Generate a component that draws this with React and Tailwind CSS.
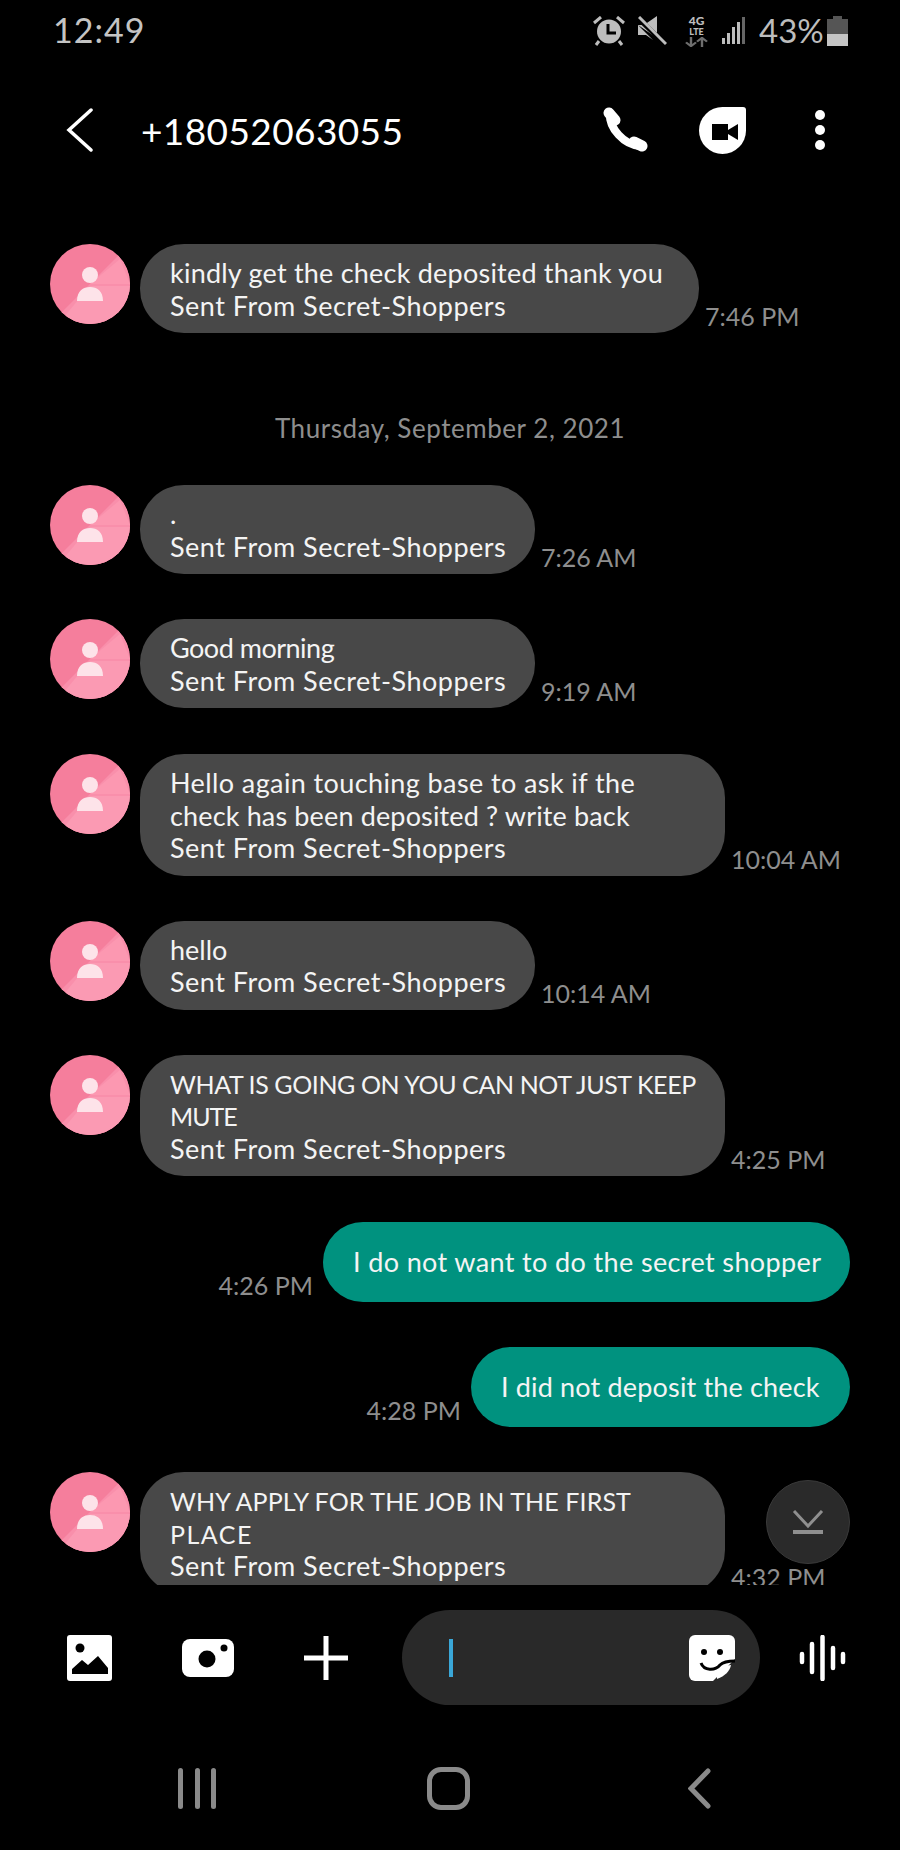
const font = { fontFamily: "Lato, 'Open Sans', sans-serif" };

const sent = ["Sent From Secret-Shoppers", "tracking-[0.5px]"];

const incoming = [
  { lines: [["kindly get the check deposited thank you", "tracking-[0.22px]"], sent], time: "7:46 PM", w: "w-[559px]", mb: "mb-[79px]" },
  { date: "Thursday, September 2, 2021" },
  { lines: [[".", ""], sent], time: "7:26 AM", w: "w-[395px]", mb: "mb-[45px]" },
  { lines: [["Good morning", "tracking-[-0.5px]"], sent], time: "9:19 AM", w: "w-[395px]", mb: "mb-[46px]" },
  { lines: [["Hello again touching base to ask if the", "tracking-[0.4px]"], ["check has been deposited ? write back", "tracking-[0.15px]"], sent], time: "10:04 AM", w: "w-[585px]", mb: "mb-[45px]" },
  { lines: [["hello", ""], sent], time: "10:14 AM", w: "w-[395px]", mb: "mb-[45px]" },
  { lines: [["WHAT IS GOING ON YOU CAN NOT JUST KEEP", "text-[25px] tracking-[-0.4px]"], ["MUTE", "text-[25px] tracking-[-1px]"], sent], time: "4:25 PM", w: "w-[585px]", mb: "mb-[46px]" },
  { out: "I do not want to do the secret shopper", track: "tracking-[0.37px]", time: "4:26 PM", w: "w-[527px]", mb: "mb-[45px]" },
  { out: "I did not deposit the check", track: "tracking-[0.17px]", time: "4:28 PM", w: "w-[379px]", mb: "mb-[45px]" },
  { lines: [["WHY APPLY FOR THE JOB IN THE FIRST", "text-[25px] tracking-[0.1px]"], ["PLACE", "text-[25px] tracking-[1.5px]"], sent], time: "4:32 PM", w: "w-[585px]", mb: "mb-0" },
];

function Avatar() {
  return (
    <svg width="80" height="80" viewBox="0 0 80 80" className="shrink-0">
      <defs>
        <clipPath id="av"><circle cx="40" cy="40" r="40" /></clipPath>
      </defs>
      <g clipPath="url(#av)">
        <rect width="80" height="80" fill="#f57e9c" />
        <polygon points="80,0 80,80 0,80" fill="#f98fab" />
        <polygon points="70,15 80,40 40,40" fill="#fc98b1" />
        <polygon points="8,80 80,80 80,42 40,42" fill="#fb9ab3" />
      </g>
      <circle cx="40" cy="31" r="8" fill="#fde3e9" />
      <path d="M27 57 C27 47 33 43 40 43 C47 43 53 47 53 57 Z" fill="#fde3e9" />
    </svg>
  );
}

function Time({ children }) {
  return <span className="text-[25px] leading-[32px] pb-[1px] text-[#8e8e8e] whitespace-nowrap">{children}</span>;
}

function Message({ m }) {
  if (m.date) {
    return <div className="text-center text-[26px] leading-[32px] tracking-[0.55px] text-[#8e8e8e] mb-[41px]">{m.date}</div>;
  }
  if (m.out) {
    return (
      <div className={`flex items-end justify-end gap-[10px] pr-[50px] ${m.mb}`}>
        <Time>{m.time}</Time>
        <div className={`${m.w} ${m.track} h-[80px] rounded-[40px] bg-[#00927f] pl-[30px] flex items-center text-[27px] text-[#f4f4f4] whitespace-nowrap`}>
          {m.out}
        </div>
      </div>
    );
  }
  return (
    <div className={`flex items-start gap-[10px] pl-[50px] ${m.mb}`}>
      <Avatar />
      <div className="flex items-end gap-[6px]">
        <div className={`${m.w} rounded-[44px] bg-[#484848] pl-[30px] pt-[13px] pb-[11px] text-[27px] leading-[32.5px] text-[#f4f4f4] whitespace-nowrap`}>
          {m.lines.map(([text, track], i) => (
            <div key={i} className={track}>{text}</div>
          ))}
        </div>
        <Time>{m.time}</Time>
      </div>
    </div>
  );
}

function StatusIcons() {
  return (
    <div className="flex items-center text-[#bdbdbd]">
      <svg width="32" height="30" viewBox="0 0 32 30">
        <circle cx="16" cy="15.5" r="12" fill="#bdbdbd" />
        <path d="M15 8 V17 H23" stroke="#000" strokeWidth="3" fill="none" />
        <path d="M1 7 L8 1 M31 7 L24 1 M6 25 L3 29 M26 25 L29 29" stroke="#bdbdbd" strokeWidth="3" />
      </svg>
      <svg width="29" height="30" viewBox="0 0 29 30" className="ml-[13px]">
        <path d="M0 9 H6 L19 0 V22 Z M0 9 V19 H8 L15 24 Z" fill="#bdbdbd" />
        <path d="M1 3 L27 28" stroke="#000" strokeWidth="5" />
        <path d="M1 1 L28 28" stroke="#bdbdbd" strokeWidth="3" />
      </svg>
      <div className="ml-[18px] w-[23px] h-[32px] flex flex-col items-center font-black">
        <span className="block text-[12px] leading-[12px]">4G</span>
        <span className="block text-[9px] leading-[10px]">LTE</span>
        <svg width="23" height="10" viewBox="0 0 23 13" preserveAspectRatio="none">
          <path d="M6 0 V11 M1 7 L6 12 L11 7" stroke="#6e6e6e" strokeWidth="2.4" fill="none" />
          <path d="M17 13 V2 M12 6 L17 1 L22 6" stroke="#6e6e6e" strokeWidth="2.4" fill="none" />
        </svg>
      </div>
      <div className="ml-[14px] flex items-end gap-[2px] h-[27px]">
        <div className="w-[3px] h-[6px] bg-[#bdbdbd]" />
        <div className="w-[3px] h-[11px] bg-[#bdbdbd]" />
        <div className="w-[3px] h-[17px] bg-[#bdbdbd]" />
        <div className="w-[3px] h-[22px] bg-[#bdbdbd]" />
        <div className="w-[3px] h-[27px] bg-[#666666]" />
      </div>
      <span className="ml-[14px] text-[33px] leading-none w-[62px] whitespace-nowrap">43%</span>
      <div className="ml-[6px] w-[21px] h-[30px] flex flex-col items-center">
        <div className="w-[9px] h-[3px] bg-[#555555]" />
        <div className="w-[21px] h-[15px] bg-[#555555]" />
        <div className="w-[21px] h-[12px] bg-[#c4c4c4]" />
      </div>
    </div>
  );
}

export default function App() {
  return (
    <div className="w-[900px] h-[1850px] bg-black flex flex-col overflow-hidden" style={font}>
      {/* status bar */}
      <div className="h-[60px] shrink-0 pl-[53px] pr-[52px] pt-[14px] flex items-start justify-between">
        <span className="text-[34px] leading-[32px] tracking-[1px] text-[#c4c4c4]">12:49</span>
        <div><StatusIcons /></div>
      </div>

      {/* header */}
      <div className="h-[140px] shrink-0 flex items-center pl-[66px]">
        <svg width="27" height="44" viewBox="0 0 27 44">
          <path d="M25 2 L3 22 L25 42" stroke="#fff" strokeWidth="3.5" fill="none" strokeLinecap="round" />
        </svg>
        <span className="ml-[48px] w-[260px] text-[37px] leading-none tracking-[0.4px] text-white whitespace-nowrap">+18052063055</span>
        <svg width="46" height="46" viewBox="0 0 46 46" className="ml-[201px]" fill="none" stroke="#fff" strokeLinecap="round">
          <path d="M8 7 C7 21 22 38 38 39" strokeWidth="8" />
          <path d="M7 6 L13 13" strokeWidth="11" />
          <path d="M32 35 L40 39" strokeWidth="11" />
        </svg>
        <svg width="47" height="47" viewBox="0 0 47 47" className="ml-[51px]">
          <path d="M23.5 0 H44 a3 3 0 0 1 3 3 V23.5 A23.5 23.5 0 1 1 23.5 0 Z" fill="#fff" />
          <rect x="13" y="17" width="16" height="16" fill="#000" />
          <polygon points="29,23 39,17 39,33 29,27" fill="#000" />
        </svg>
        <div className="ml-[69px] flex flex-col gap-[5px]">
          <div className="w-[10px] h-[10px] rounded-full bg-white" />
          <div className="w-[10px] h-[10px] rounded-full bg-white" />
          <div className="w-[10px] h-[10px] rounded-full bg-white" />
        </div>
      </div>

      {/* messages */}
      <div className="relative h-[1385px] shrink-0 overflow-hidden pt-[44px]">
        {incoming.map((m, i) => (
          <Message key={i} m={m} />
        ))}
        <div className="absolute right-[50px] top-[1280px] w-[84px] h-[84px] rounded-full bg-[#2a2a2a] border border-[#3a3a3a] flex items-center justify-center">
          <svg width="32" height="24" viewBox="0 0 32 24" fill="none" stroke="#8f8f8f">
            <path d="M2 1 L16 16 L30 1" strokeWidth="3" />
            <path d="M1 22 H31" strokeWidth="4" />
          </svg>
        </div>
      </div>

      {/* composer */}
      <div className="h-[145px] shrink-0 pt-[25px] pl-[67px] flex items-start">
        <div className="h-[95px] flex items-center">
          <svg width="45" height="46" viewBox="0 0 45 46">
            <rect width="45" height="46" rx="3" fill="#fff" />
            <circle cx="13" cy="13" r="4.5" fill="#000" />
            <path d="M5 38 L5 34 L15 25 L21 30 L31 21 L41 33 L41 39 L5 39 Z" fill="#000" />
          </svg>
          <svg width="52" height="38" viewBox="0 0 52 38" className="ml-[70px]">
            <rect width="52" height="38" rx="8" fill="#fff" />
            <circle cx="25" cy="20" r="8.5" fill="#000" />
            <circle cx="42" cy="9" r="3.5" fill="#000" />
          </svg>
          <svg width="44" height="44" viewBox="0 0 44 44" className="ml-[70px]">
            <path d="M0 22 H44 M22 0 V44" stroke="#fff" strokeWidth="5" />
          </svg>
        </div>
        <div className="ml-[54px] w-[358px] h-[95px] rounded-full bg-[#292929] pl-[47px] pr-[25px] flex items-center justify-between">
          <div className="w-[4px] h-[38px] bg-[#3aa7d8]" />
          <svg width="46" height="46" viewBox="0 0 46 46">
            <path d="M6 0 H40 a6 6 0 0 1 6 6 V24 L24 46 H6 a6 6 0 0 1 -6 -6 V6 a6 6 0 0 1 6 -6 Z" fill="#fff" />
            <circle cx="15" cy="17" r="3" fill="#000" />
            <circle cx="31" cy="17" r="3" fill="#000" />
            <path d="M12 28 C15 36 26 36 31 30 C34 27 40 26 46 26" stroke="#000" strokeWidth="3" fill="none" />
            <path d="M28 44 C27 36 33 31 42 30 C41 36 36 41 28 44 Z" fill="#fff" />
          </svg>
        </div>
        <div className="ml-[39px] h-[95px] flex items-center">
          <svg width="47" height="46" viewBox="0 0 47 46" stroke="#fff" strokeWidth="4.5" strokeLinecap="round">
            <path d="M3 19 V27 M13 9 V37 M23.5 2 V44 M34 13 V33 M44 19 V27" />
          </svg>
        </div>
      </div>

      {/* nav */}
      <div className="flex-1 pl-[178px] pt-[38px] flex items-start">
        <div className="w-[38px] h-[41px] flex justify-between">
          <div className="w-[5px] h-[41px] rounded-full bg-[#8a8a8a]" />
          <div className="w-[5px] h-[41px] rounded-full bg-[#8a8a8a]" />
          <div className="w-[5px] h-[41px] rounded-full bg-[#8a8a8a]" />
        </div>
        <div className="ml-[211px] w-[43px] h-[43px] -mt-[1px] rounded-[14px] border-[5px] border-[#8a8a8a]" />
        <svg width="23" height="41" viewBox="0 0 23 41" className="ml-[218px]">
          <path d="M20 3 L3 20.5 L20 38" stroke="#8a8a8a" strokeWidth="5" fill="none" strokeLinecap="round" />
        </svg>
      </div>
    </div>
  );
}
